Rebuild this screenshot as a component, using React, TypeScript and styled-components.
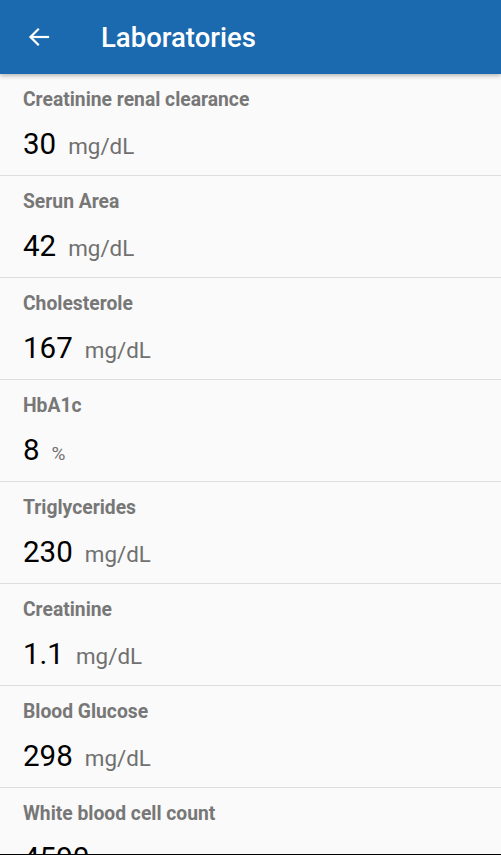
import React from "react";
import styled, { createGlobalStyle } from "styled-components";

const Global = createGlobalStyle`
  html, body { margin: 0; padding: 0; background: #fafafa; }
  body { font-family: Roboto, "Noto Sans", sans-serif; overflow: hidden; }
`;

const Page = styled.div`
  width: 501px;
  height: 855px;
  overflow: hidden;
  background: #fafafa;
  position: relative;
`;

const Header = styled.header`
  height: 74px;
  background: #1b6aaf;
  display: flex;
  align-items: center;
  padding-left: 26px;
  box-shadow: 0 2px 4px rgba(0,0,0,0.25);
  position: relative;
  z-index: 1;
`;

const BackButton = styled.div`
  width: 26px;
  height: 26px;
  display: flex;
  align-items: center;
  justify-content: center;
  margin-right: 49px;
`;

const Title = styled.h1`
  margin: 0;
  color: #fff;
  font-size: 27.5px;
  font-weight: 500;
`;

const List = styled.div`
  display: flex;
  flex-direction: column;
`;

const Row = styled.div`
  height: 102px;
  box-sizing: border-box;
  border-bottom: 1px solid #dedede;
  padding: 14px 23px 0;
`;

const Label = styled.div`
  font-size: 19.3px;
  font-weight: 700;
  color: #777777;
  line-height: 24px;
`;

const ValueLine = styled.div`
  display: flex;
  align-items: baseline;
  margin-top: 14px;
`;

const Value = styled.span`
  font-size: 29.5px;
  color: #000;
  margin-right: 12px;
  line-height: 36px;
`;

const Unit = styled.span<{ $small?: boolean }>`
  font-size: ${(p) => (p.$small ? "19px" : "22.4px")};
  color: #707070;
`;

const BottomEdge = styled.div`
  position: absolute;
  left: 0;
  right: 0;
  bottom: 0;
  height: 1px;
  background: #000;
`;

const items = [
  { label: "Creatinine renal clearance", value: "30", unit: "mg/dL" },
  { label: "Serun Area", value: "42", unit: "mg/dL" },
  { label: "Cholesterole", value: "167", unit: "mg/dL" },
  { label: "HbA1c", value: "8", unit: "%" },
  { label: "Triglycerides", value: "230", unit: "mg/dL" },
  { label: "Creatinine", value: "1.1", unit: "mg/dL" },
  { label: "Blood Glucose", value: "298", unit: "mg/dL" },
  { label: "White blood cell count", value: "4590", unit: "" },
];

export default function App() {
  return (
    <Page>
      <Global />
      <Header>
        <BackButton>
          <svg width="24" height="24" viewBox="0 0 24 24" fill="none" stroke="#fff" strokeWidth="2.2" strokeLinecap="square">
            <path d="M21 12H4" />
            <path d="M11 4.5L3.5 12L11 19.5" />
          </svg>
        </BackButton>
        <Title>Laboratories</Title>
      </Header>
      <List>
        {items.map((it) => (
          <Row key={it.label}>
            <Label>{it.label}</Label>
            <ValueLine>
              <Value>{it.value}</Value>
              {it.unit && <Unit $small={it.unit === "%"}>{it.unit}</Unit>}
            </ValueLine>
          </Row>
        ))}
      </List>
      <BottomEdge />
    </Page>
  );
}
